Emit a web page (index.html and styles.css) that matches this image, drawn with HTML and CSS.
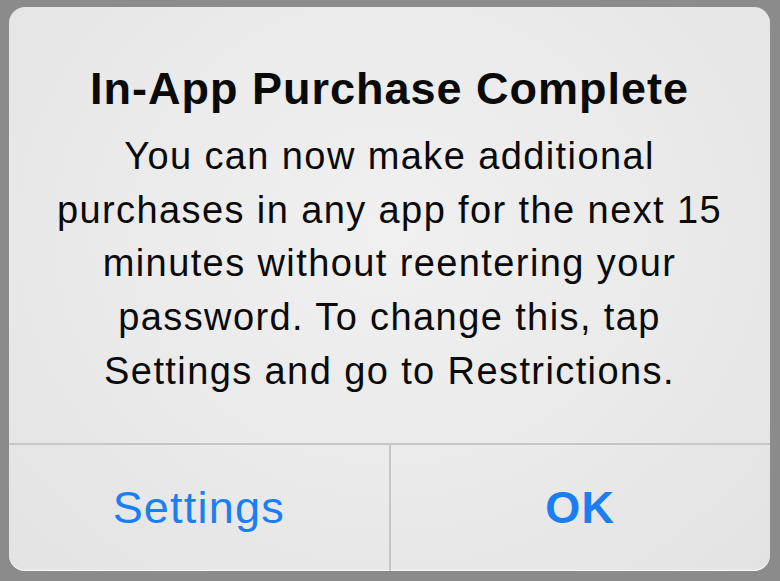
FILE: index.html
```html
<!DOCTYPE html>
<html lang="en">
<head>
    <meta charset="UTF-8">
    <title>In-App Purchase Complete</title>
    <link rel="stylesheet" href="styles.css">
</head>
<body>
    <div class="alert">
        <div class="alert-content">
            <h1 class="alert-title">In-App Purchase Complete</h1>
            <p class="alert-message">You can now make additional<br>purchases in any app for the next 15<br>minutes without reentering your<br>password. To change this, tap<br>Settings and go to Restrictions.</p>
        </div>
        <div class="alert-actions">
            <a href="#" class="alert-btn">Settings</a>
            <a href="#" class="alert-btn alert-btn-bold">OK</a>
        </div>
    </div>
</body>
</html>
```

FILE: styles.css
```css
:root {
    --backdrop: #8b8b8b;
    --panel: #e8e8e8;
    --divider: #c6c6c6;
    --text: #0a0a0a;
    --blue: #1a7ef5;
}

* {
    margin: 0;
    padding: 0;
    box-sizing: border-box;
}

html, body {
    height: 100%;
}

body {
    background-color: var(--backdrop);
    font-family: 'Liberation Sans', Arial, sans-serif;
    padding: 7px 10px 10px 9px;
}

.alert {
    height: 564px;
    border-radius: 16px;
    background: radial-gradient(ellipse at 50% 40%, #f0f0f0 0%, #ebebeb 45%, #e3e3e3 100%);
    box-shadow: inset 0 -1px 0 rgba(255, 255, 255, 0.8);
    display: flex;
    flex-direction: column;
    overflow: hidden;
}

.alert-content {
    height: 438px;
    padding-top: 55px;
    text-align: center;
    border-bottom: 2px solid var(--divider);
}

.alert-title {
    font-size: 45px;
    font-weight: 700;
    line-height: 54px;
    letter-spacing: 1px;
    color: var(--text);
    margin-bottom: 14px;
}

.alert-message {
    font-size: 38px;
    line-height: 53.7px;
    letter-spacing: 1.4px;
    color: var(--text);
}

/* Buttons */
.alert-actions {
    flex: 1;
    display: flex;
}

.alert-btn {
    flex: 1;
    display: flex;
    align-items: center;
    justify-content: center;
    font-size: 45px;
    letter-spacing: 1.2px;
    color: var(--blue);
    text-decoration: none;
}

.alert-btn + .alert-btn {
    border-left: 2px solid var(--divider);
}

.alert-btn-bold {
    font-weight: 700;
}
```
